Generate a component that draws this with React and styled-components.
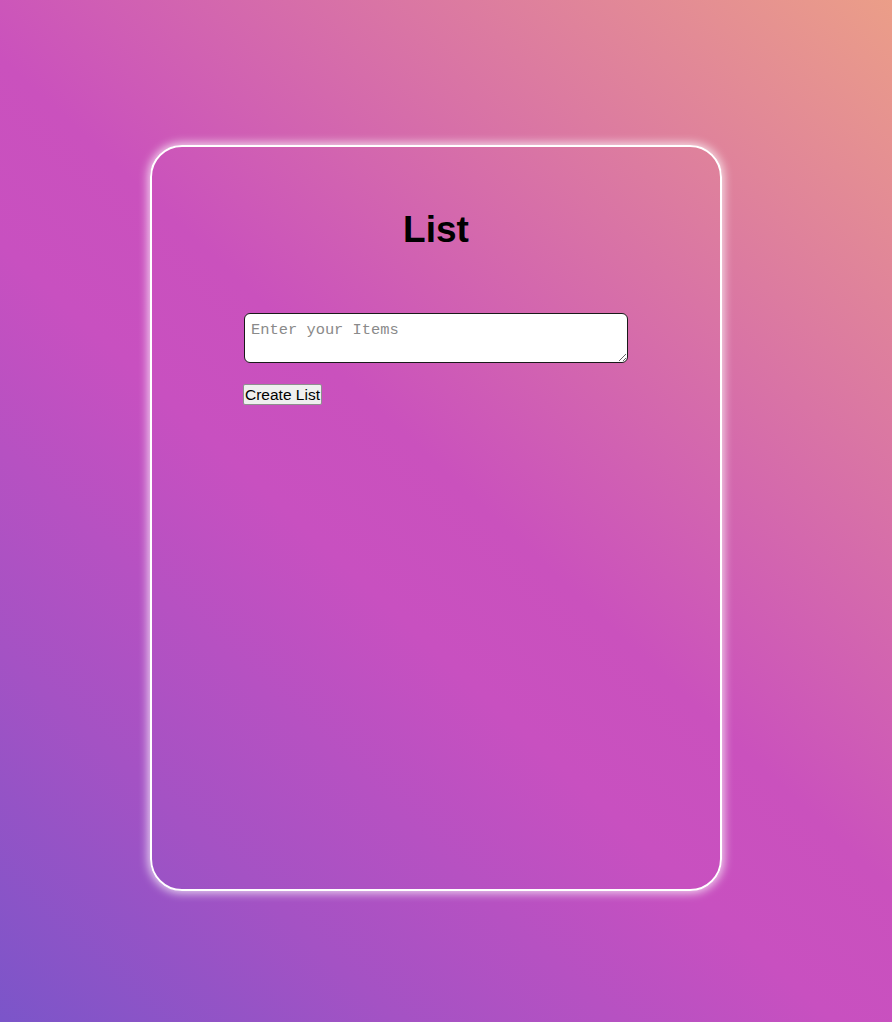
import React from "react";
import styled, { createGlobalStyle } from "styled-components";

const Global = createGlobalStyle`
  html, body { margin: 0; padding: 0; }
  body {
    min-height: 1022px;
    font-family: "Liberation Sans", Arial, sans-serif;
    background: linear-gradient(
      43deg,
      #7b55c9 0%,
      #a452c4 20%,
      #c850c0 42%,
      #ca51bd 52%,
      #eb9e88 100%
    );
  }
`;

const Page = styled.div`
  min-height: 1022px;
  box-sizing: border-box;
  padding: 145px 0 0 150px;
`;

const Card = styled.div`
  box-sizing: border-box;
  width: 572px;
  height: 746px;
  border: 2px solid #ffffff;
  border-radius: 32px;
  box-shadow: 0 0 10px 2px rgba(255, 255, 255, 0.75);
  display: flex;
  flex-direction: column;
  align-items: center;
`;

const Title = styled.h1`
  margin: 62px 0 0;
  font-size: 37px;
  font-weight: 700;
  line-height: 42px;
  color: #000;
`;

const Form = styled.div`
  width: 386px;
  margin-top: 62px;
  display: flex;
  flex-direction: column;
  align-items: flex-start;
  gap: 21px;
`;

const Input = styled.textarea`
  box-sizing: border-box;
  width: 384px;
  height: 50px;
  margin-left: 1px;
  padding: 7px 6px 4px;
  border: 1px solid #1a1a1a;
  border-radius: 6px;
  background: #fff;
  font-family: "Liberation Mono", "Courier New", monospace;
  font-size: 15.4px;
  &::placeholder { color: #8a8a8a; }
`;

const Button = styled.button`
  box-sizing: border-box;
  height: 21px;
  padding: 0 1px;
  border: 1px solid #8f8f8f;
  border-radius: 2px;
  background: #efefef;
  font-family: "Liberation Sans", Arial, sans-serif;
  font-size: 15.5px;
  color: #000;
  line-height: 19px;
`;

export default function App() {
  return (
    <>
      <Global />
      <Page>
        <Card>
          <Title>List</Title>
          <Form>
            <Input placeholder="Enter your Items" />
            <Button>Create List</Button>
          </Form>
        </Card>
      </Page>
    </>
  );
}
